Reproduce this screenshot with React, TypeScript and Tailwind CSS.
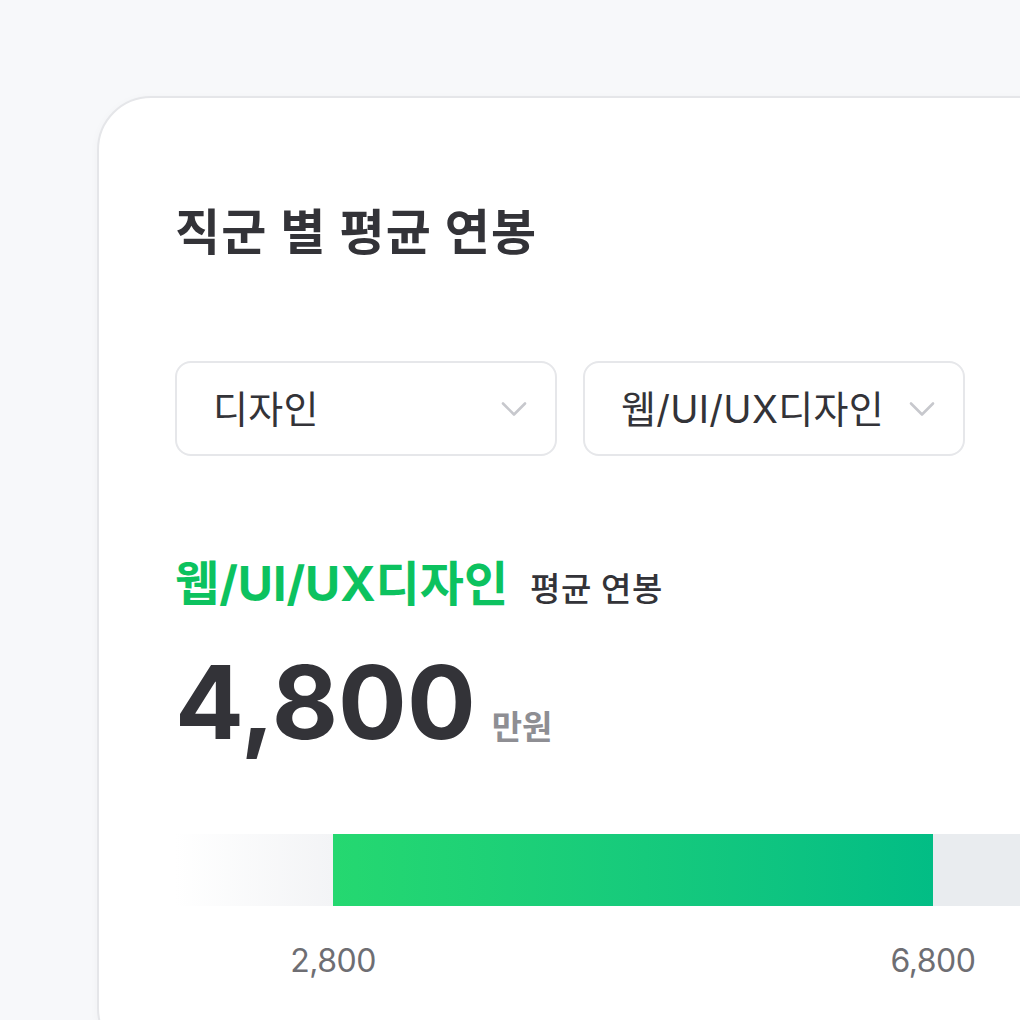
const font = { fontFamily: 'Inter, "Noto Sans CJK KR", sans-serif' }

const Chevron = () => (
  <svg width="26" height="16" viewBox="0 0 26 16" fill="none" className="shrink-0">
    <path d="M2 2.5 13 13.5 24 2.5" stroke="#c7c8cd" strokeWidth="2.6" strokeLinecap="round" strokeLinejoin="round" />
  </svg>
)

const Select = ({ label }: { label: string }) => (
  <div className="flex h-[95px] w-[382px] items-center justify-between rounded-[16px] border-2 border-[#e6e7ea] bg-white pl-[36px] pr-[28px]">
    <span className="text-[38px] leading-none tracking-[0.3px] text-[#333338]">{label}</span>
    <Chevron />
  </div>
)

export default function App() {
  return (
    <div style={font} className="h-[1020px] w-[1020px] overflow-hidden bg-[#f7f8fa] pl-[97px] pt-[96px]">
      <div className="h-[966px] w-[1000px] rounded-[54px] border-2 border-[#e5e6e9] bg-white pl-[76px] pt-[110px] shadow-[0_2px_10px_rgba(0,0,0,0.03)]">
        <h1 className="text-[49px] font-bold leading-none tracking-[1.2px] text-[#333338]">직군 별 평균 연봉</h1>

        <div className="mt-[104px] flex gap-[26px]">
          <Select label="디자인" />
          <Select label="웹/UI/UX디자인" />
        </div>

        <div className="mt-[104px] flex items-baseline gap-[22px]">
          <span className="text-[48px] font-bold leading-none tracking-[0px] text-[#0cc25f]">웹/UI/UX디자인</span>
          <span className="text-[33px] font-medium leading-none tracking-[0.5px] text-[#333338]">평균 연봉</span>
        </div>

        <div className="mt-[43px] flex items-baseline gap-[16px]">
          <span className="text-[102px] font-bold leading-none text-[#333338]">4,800</span>
          <span className="text-[33px] font-bold leading-none text-[#8e8e93]">만원</span>
        </div>

        <div className="mt-[81px] flex h-[72px]">
          <div className="w-[158px] bg-gradient-to-r from-white to-[#f3f4f6]" />
          <div className="w-[600px] bg-gradient-to-r from-[#25d870] to-[#02bd85]" />
          <div className="flex-1 bg-[#e9ecef]" />
        </div>

        <div className="relative mt-[39px] h-[34px] text-[32px] leading-none tracking-[-0.5px] text-[#6e6e73]">
          <span className="absolute left-[158px] -translate-x-1/2">2,800</span>
          <span className="absolute left-[758px] -translate-x-1/2">6,800</span>
        </div>
      </div>
    </div>
  )
}
